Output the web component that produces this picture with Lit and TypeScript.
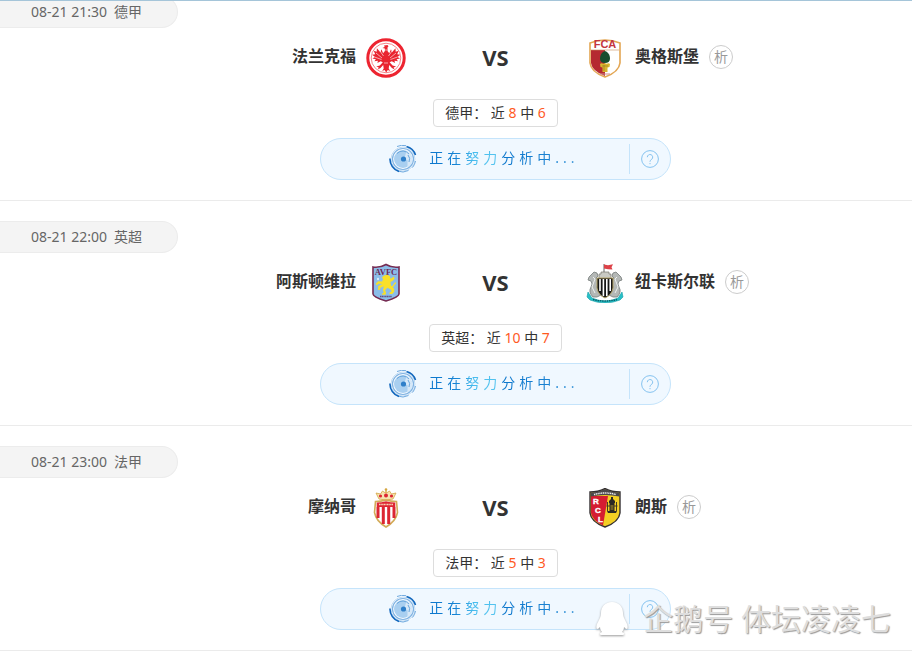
import { LitElement, html, css, svg, TemplateResult } from "lit";
import { customElement, property } from "lit/decorators.js";

interface Team {
  name: string;
  crest: string;
}

interface Match {
  time: string;
  league: string;
  home: Team;
  away: Team;
  recent: number;
  hits: number;
}

const MATCHES: Match[] = [
  {
    time: "08-21 21:30",
    league: "德甲",
    home: { name: "法兰克福", crest: "frankfurt" },
    away: { name: "奥格斯堡", crest: "augsburg" },
    recent: 8,
    hits: 6,
  },
  {
    time: "08-21 22:00",
    league: "英超",
    home: { name: "阿斯顿维拉", crest: "villa" },
    away: { name: "纽卡斯尔联", crest: "newcastle" },
    recent: 10,
    hits: 7,
  },
  {
    time: "08-21 23:00",
    league: "法甲",
    home: { name: "摩纳哥", crest: "monaco" },
    away: { name: "朗斯", crest: "lens" },
    recent: 5,
    hits: 3,
  },
];

const FONT = css`"Noto Sans", "Noto Sans CJK SC", sans-serif`;

const CRESTS: Record<string, TemplateResult> = {
  frankfurt: svg`
    <circle cx="20" cy="20" r="18.2" fill="#fff" stroke="#ed2430" stroke-width="3"/>
    <circle cx="20" cy="20" r="14.8" fill="none" stroke="#f4626a" stroke-width="0.8"/>
    <path fill="#e92530" d="M18 7.5l3.500-.5 1 1.200-1 1.300v3.500l1.800 2.200 1.700-4 1 3 3.500-4 .2 3.500 3-1-1.500 3.500 3 .5-2.700 2.300 2.500 1.500-3.500.8 1.500 2-3.500-.6.500 2.300-3.200-1.800-2.200 1 3 3.300 3.500 1-2.500 1 1 2-2.700-1.600-2.700-2.900-.5 3.500 1.500 2.500-2.400-1-1.600 2.500-1.600-2.500-2.400 1 1.500-2.500-.5-3.500-2.700 2.900-2.700 1.600 1-2-2.500-1 3.500-1 3-3.300-2.200-1-3.200 1.800.5-2.300-3.500.6 1.500-2-3.500-.8 2.500-1.500-2.700-2.300 3-.5-1.500-3.500 3 1 .2-3.500 3.500 4 1-3 1.700 4 1.800-2.200v-2.500l-2.500-.6 2.300-.8z"/>
    <path stroke="#fff" stroke-width=".6" fill="none" d="M10 15l6 5M8.500 19l7 2.500M30 15l-6 5M31.500 19l-7 2.500M14 13l3.500 5M26 13l-3.500 5M19 12h2M18 25h4"/>`,
  augsburg: svg`
    <path d="M5 5Q20-1 35 5V25Q34 34 20 39Q6 34 5 25Z" fill="#fff" stroke="#e3a653" stroke-width="1.600"/>
    <path d="M6 12H20V38Q7 33 6 25Z" fill="#b52a31"/>
    <path d="M6 12H34" stroke="#c98f5a" stroke-width=".6"/>
    <text x="20" y="10" text-anchor="middle" font-family="Liberation Sans" font-size="11" font-weight="700" fill="#c3343e">FCA</text>
    <path d="M20 13c3 1 5 4 5 7.500 0 3-2 4.500-5 4.500s-5-1.500-5-4.500c0-3.500 2-6.500 5-7.500z" fill="#174d2e"/>
    <path d="M15 26c2-2 3 1 5-1 2 2 3-1 5 1l-.5 3-2 .5v4.500h-5v-4.500l-2-.5z" fill="#d9b52f"/>
    <path d="M17 28h6M19 27v6" stroke="#9c7d22" stroke-width=".7"/>
    <path d="M15 36h10" stroke="#d08b8b"/>`,
  villa: svg`
    <path d="M7 4Q14 5 20 1.500Q26 5 33 4V31Q33 34 20 38Q7 34 7 31Z" fill="#8bbde9" stroke="#752b52" stroke-width="1.600"/>
    <text x="20" y="11.500" text-anchor="middle" font-family="Liberation Serif" font-size="8.500" font-weight="700" fill="#6d2a58">AVFC</text>
    <path d="M18 12.500l3.500-.8 2.500 1.500.3 2.500 2.200-1.200 1-1 1.200 2-2.200 2.600-2 1 .5 3.500 3 3 .3 3-2 2.500h-3l.3-1.500 1.800-.8-.3-2-3.500-2-2.500 2.300 1 2.700-.5 2h-3.500l.2-1.500 1.500-.4-.8-3 .8-3.600-3.300 1.500-.5 2-2 .3.300-4 4-2-3.500-.4-2 1.500-1.200-1.500 2.500-2.400 4 .3 1-2.500-1.300-1.600z" fill="#f9e028"/>
    <path d="M25.500 24c3 0 2-4 4.500-4" fill="none" stroke="#f9e028" stroke-width="1.300"/>
    <path d="M12 14.500l1 1.500-1 1.500-1-1.500z" fill="#fff"/>
    <path d="M14 33.500h12" stroke="#665083" stroke-width="1.500" stroke-dasharray="1.300 .4"/>`,
  newcastle: svg`
    <path d="M3 29l4 6q13 6 26 0l4-6 1 5-3 3q-15 6-30 0l-3-3z" fill="#26c0c8" stroke="#149ca4" stroke-width=".6"/>
    <path d="M8 34Q3 29 6 24q2-3 0-6l-3-1 1-3 3-3 2-2 3 1 1 3-2 2 3 4-2 5 4 8-4 2zM32 34q5-5 2-10-2-3 0-6l3-1-1-3-3-3-2-2-3 1-1 3 2 2-3 4 2 5-4 8 4 2z" fill="#b4b8b6" stroke="#757b7a" stroke-width=".8"/>
    <path d="M8 14l2 2-3 8 3 6M32 14l-2 2 3 8-3 6" stroke="#eef0ef" stroke-width="1" fill="none"/>
    <path d="M14 16v-5h2V9h8v2h2v5z" fill="#c9cac4" stroke="#77776e" stroke-width=".7"/>
    <path d="M19 9V1" stroke="#666"/>
    <path d="M19 1.500l4 .8 5-1-1.500 3 1 2.200-4.500-.2-4-.8z" fill="#dd4248"/>
    <path d="M12 15h16v10q-1 7-8 10-7-3-8-10z" fill="#171717" stroke="#b5a56b"/>
    <path d="M15 16v12M18.400 16v17M21.800 16v17M25.200 16v12" stroke="#fff" stroke-width="1.600"/>
    <path d="M8 36.500q12 3 24 0" fill="none" stroke="#07646e" stroke-width="1.500" stroke-dasharray="1.500 .8"/>`,
  monaco: svg`
    <path d="M13 11l-3-6 4.500 1 2-3 3 2 .5-3 .5 3 3-2 2 3 4.500-1-3 6q-7 2-14 0z" fill="#f6e3b0" stroke="#d3a544" stroke-width=".8"/>
    <circle cx="20" cy="1.500" r="1.300" fill="#d5a640"/>
    <circle cx="14.500" cy="8" r="1.600" fill="#dd2632"/>
    <circle cx="20" cy="7.500" r="2" fill="#dd2632"/>
    <circle cx="25.500" cy="8" r="1.600" fill="#dd2632"/>
    <path d="M9.500 13.500q5.500 0 10.500-1.500 5 1.500 10.500 1.500l1 11Q30 33 20 39 10 33 8.500 24.500z" fill="#fff" stroke="#d3ab58" stroke-width="1.600"/>
    <path d="M10.700 14.500q5 0 9.300-1.300 4.300 1.300 9.300 1.300V19H10.700z" fill="#de2632"/>
    <path d="M12 19v11M17.300 19v17M22.700 19v17M28 19v11" stroke="#dc2632" stroke-width="3"/>
    <path d="M13 16.600h14" stroke="#f6d3b4" stroke-width="1.500" stroke-dasharray="1.200 .4"/>`,
  lens: svg`
    <path d="M5 4q8 0 15-3.500Q27 4 35 4v21Q34 34 20 39 6 34 5 25z" fill="#f3cf24" stroke="#343032" stroke-width="1.400"/>
    <path d="M6 8h17l-5 29.500Q7 32 6 25z" fill="#d51d31"/>
    <path d="M5.700 4.600Q13 4.500 20 1q7 3.500 14.300 3.600V8.500Q20 5.500 5.700 8.500z" fill="#4a484b"/>
    <path d="M9 6.500q11-3 22 0" fill="none" stroke="#eee" stroke-width="1.500" stroke-dasharray="1.200 .6"/>
    <g font-family="Liberation Sans" font-size="8" font-weight="700" fill="#fff" stroke="#fff" stroke-width=".4">
      <text x="8" y="16">R</text><text x="10" y="25">C</text><text x="13" y="34">L</text>
    </g>
    <path d="M26 11v-2h2v2l2 2v2h-6v-2zM24.500 15h5v8h-5zM22 23h10l-1 2h-8z" fill="#2b2924"/>
    <path d="M22.500 14v9M31.500 14v9M21.500 18h11" stroke="#413b26" stroke-width="1" fill="none"/>
    <path d="M26.200 17v5M27.800 17v5" stroke="#b69a28" stroke-width=".7"/>`,
};

@customElement("team-crest")
class TeamCrest extends LitElement {
  @property() name = "";

  static styles = css`
    :host {
      display: block;
      flex: none;
      width: 40px;
      height: 40px;
    }
    .crest {
      display: block;
      width: 100%;
      height: 100%;
    }
  `;

  render() {
    return html`<svg class="crest" viewBox="0 0 40 40" aria-hidden="true">${CRESTS[this.name]}</svg>`;
  }
}

@customElement("analysis-bar")
class AnalysisBar extends LitElement {
  static styles = css`
    :host {
      display: block;
      width: 100%;
      max-width: 351px;
    }
    .bar {
      box-sizing: border-box;
      display: flex;
      align-items: center;
      height: 42px;
      border: 1px solid #c5e4fb;
      border-radius: 21px;
      background: #f0f8ff;
    }
    button {
      margin: 0;
      border: 0;
      background: none;
      font: 14px/20px ${FONT};
      cursor: pointer;
    }
    .status {
      flex: 1;
      display: flex;
      align-items: center;
      justify-content: center;
      gap: 12px;
      padding: 0 0 0 18px;
    }
    .radar {
      width: 28px;
      height: 28px;
    }
    .label {
      padding-bottom: 2px;
      letter-spacing: 4px;
      color: transparent;
      background: linear-gradient(90deg, #0b76cc 0%, #1583d4 18%, #48bdee 30%, #55c4ef 46%, #0b76cc 49%, #1a82d2 80%, #4b9fdc 100%);
      background-clip: text;
      -webkit-background-clip: text;
    }
    .help {
      display: flex;
      align-items: center;
      justify-content: center;
      width: 41px;
      height: 30px;
      padding: 0;
      border-left: 1px solid #c5e4fb;
    }
    .mark {
      width: 18px;
      height: 18px;
    }
  `;

  render() {
    return html`
      <div class="bar">
        <button class="status" type="button">
          <svg class="radar" viewBox="0 0 28 28" fill="none" aria-hidden="true">
            <circle cx="14" cy="14" r="13" fill="#f8fcff" />
            <circle cx="14" cy="14" r="9" fill="#a9cff0" />
            <path d="M15 15l3.500 0v8l4-3 1-6-2-6-4-2z" fill="#d6e8f8" />
            <circle cx="14" cy="14" r="10.500" stroke="#7fb2e2" stroke-width="1.200" />
            <circle cx="14" cy="14" r="12" stroke="#b2d2ef" stroke-width=".8" />
            <path d="M8 8.500a8 8 0 0 1 12 .5M19 10a6.500 6.500 0 0 1 1 7" stroke="#6aa7dd" />
            <path d="M8 1.500a14 14 0 0 1 9-.8M19.500 25.500a13 13 0 0 1-11 .5M26.500 16a13 13 0 0 1-3 6.500" stroke="#6fa9df" />
            <path d="M17.500 1.500a13 13 0 0 1 9 8.500M1 13.500A13 13 0 0 0 10 26.500" stroke="#1267bd" stroke-width="1.600" />
            <circle cx="14.500" cy="14" r="2.600" fill="#2f7fc9" />
          </svg>
          <span class="label">正在努力分析中...</span>
        </button>
        <button class="help" type="button" aria-label="帮助">
          <svg class="mark" viewBox="0 0 18 18" fill="none" stroke="#86c3ef" aria-hidden="true">
            <circle cx="9" cy="9" r="8.400" />
            <path d="M6.300 7.200a2.700 2.700 0 1 1 4.500 2C9.500 10.200 9 10.500 9 11.800M9 13v1.200" />
          </svg>
        </button>
      </div>
    `;
  }
}

@customElement("match-card")
class MatchCard extends LitElement {
  @property({ attribute: false }) match!: Match;

  static styles = css`
    :host {
      display: block;
      padding: 20px 0;
      border-bottom: 1px solid #ebebeb;
      color: #333;
      font: 14px/20px ${FONT};
    }
    .tag {
      box-sizing: border-box;
      display: flex;
      align-items: center;
      gap: 7px;
      width: 178px;
      height: 32px;
      padding-left: 31px;
      border: 1px solid #ececec;
      border-left: 0;
      border-radius: 0 16px 16px 0;
      background: #f4f4f4;
      color: #666;
    }
    .body {
      display: flex;
      flex-direction: column;
      align-items: center;
      padding: 10px 0 0 79px;
    }
    .teams {
      align-self: stretch;
      display: grid;
      grid-template-columns: 1fr 179px 1fr;
      align-items: center;
    }
    .team {
      display: flex;
      align-items: center;
      gap: 10px;
    }
    .home {
      justify-content: flex-end;
    }
    .name {
      font-size: 16px;
      line-height: 24px;
      font-weight: 700;
      padding-bottom: 4px;
    }
    .vs {
      padding-bottom: 2px;
      text-align: center;
      font-size: 22px;
      line-height: 32px;
      font-weight: 700;
    }
    .more {
      box-sizing: border-box;
      width: 24px;
      height: 24px;
      margin-bottom: 2px;
      border: 1px solid #ccc;
      border-radius: 50%;
      color: #999;
      line-height: 22px;
      text-align: center;
      text-decoration: none;
    }
    .record {
      margin: 21px 0 11px;
      padding: 3px 11px;
      border: 1px solid #ddd;
      border-radius: 4px;
    }
    .count {
      color: #ff5a1f;
    }
  `;

  render() {
    const { time, league, home, away, recent, hits } = this.match;
    return html`
      <div class="tag"><time>${time}</time><span>${league}</span></div>
      <div class="body">
        <div class="teams">
          <div class="team home">
            <span class="name">${home.name}</span>
            <team-crest name=${home.crest}></team-crest>
          </div>
          <span class="vs">VS</span>
          <div class="team">
            <team-crest name=${away.crest}></team-crest>
            <span class="name">${away.name}</span>
            <a class="more" href="#">析</a>
          </div>
        </div>
        <div class="record">
          ${league}： 近 <span class="count">${recent}</span> 中 <span class="count">${hits}</span>
        </div>
        <analysis-bar></analysis-bar>
      </div>
    `;
  }
}

@customElement("app-root")
class AppRoot extends LitElement {
  static styles = css`
    :host {
      display: block;
      position: relative;
      overflow: hidden;
      background: #fff;
    }
    .edge {
      position: absolute;
      top: 0;
      left: 0;
      right: 0;
      height: 1px;
      background: #a5c5d9;
    }
    .list {
      margin-top: -24px;
    }
    .watermark {
      position: absolute;
      right: 21px;
      bottom: 10px;
      display: flex;
      align-items: center;
      gap: 15px;
      color: #dedede;
      font: 30px/44px ${FONT};
      text-shadow: 1px 1px 1px #999;
      pointer-events: none;
    }
    .penguin {
      width: 32px;
      height: 36px;
      filter: drop-shadow(0 1px 1px #999);
    }
  `;

  render() {
    return html`
      <main class="list">
        ${MATCHES.map((m) => html`<match-card .match=${m}></match-card>`)}
      </main>
      <div class="edge"></div>
      <div class="watermark">
        <svg class="penguin" viewBox="0 0 32 36" aria-hidden="true">
          <path fill="#fff" d="M16 1C9 1 5 6 5 12c0 3-1 5-3 9-2 3-2 6-1 7 1 0 2-1 3-2 0 2 1 4 2 5-3 1-3 3 0 3h20c3 0 3-2 0-3 1-1 2-3 2-5 1 1 2 2 3 2 1-1 1-4-1-7-2-4-3-6-3-9 0-6-4-11-11-11z" />
        </svg>
        <span>企鹅号 体坛凌凌七</span>
      </div>
    `;
  }
}
